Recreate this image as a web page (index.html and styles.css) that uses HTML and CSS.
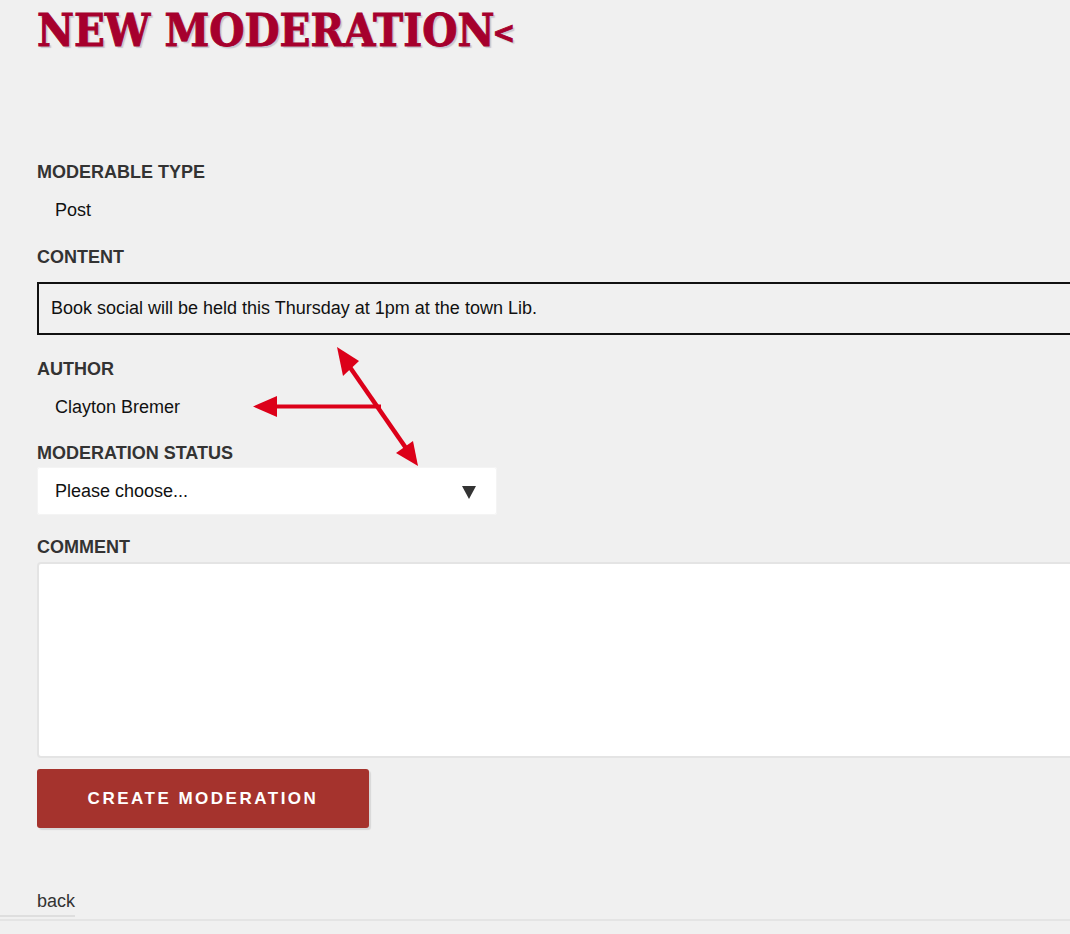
FILE: index.html
```html
<!DOCTYPE html>
<html lang="en">
<head>
<meta charset="utf-8">
<title>New Moderation</title>
<link rel="stylesheet" href="styles.css">
</head>
<body>
<div class="page">
  <h1 class="title">NEW MODERATION<span class="lt">&lt;</span></h1>

  <form class="form">
    <div class="field">
      <div class="label">MODERABLE TYPE</div>
      <div class="value">Post</div>
    </div>

    <div class="field field-content">
      <div class="label">CONTENT</div>
      <div class="content-box">Book social will be held this Thursday at 1pm at the town Lib.</div>
    </div>

    <div class="field field-author">
      <div class="label">AUTHOR</div>
      <div class="value">Clayton Bremer</div>
    </div>

    <div class="field field-status">
      <div class="label label-tight">MODERATION STATUS</div>
      <div class="select">
        <span>Please choose...</span>
        <span class="caret"></span>
      </div>
    </div>

    <div class="field field-comment">
      <div class="label label-tight">COMMENT</div>
      <div class="textarea"></div>
    </div>

    <button type="button" class="submit">CREATE MODERATION</button>
  </form>

  <div class="back-row"><a class="back" href="#">back</a></div>
  <div class="footer-rule"></div>

  <svg class="annotations" width="1070" height="934" viewBox="0 0 1070 934">
    <g fill="#dc0019" stroke="#dc0019">
      <line x1="274" y1="406.5" x2="381" y2="406.5" stroke-width="4"/>
      <polygon points="253,406.5 277,396 277,417" stroke="none"/>
      <line x1="347" y1="363" x2="408" y2="451" stroke-width="4.5"/>
      <polygon points="337,347 359,361 343,376" stroke="none"/>
      <polygon points="418,466 396,453 413,441" stroke="none"/>
    </g>
  </svg>
</div>
</body>
</html>
```

FILE: styles.css
```css
html, body {
  margin: 0;
  padding: 0;
  background: #f0f0f0;
  overflow: hidden;
}

.page {
  position: relative;
  width: 1070px;
  min-height: 934px;
  font-family: "Liberation Sans", Arial, sans-serif;
  font-size: 18px;
  line-height: 22px;
  color: #111;
}

.title {
  margin: 0;
  padding: 6px 0 0 37px;
  height: 117px;
  box-sizing: border-box;
  font-family: "DejaVu Serif", Georgia, serif;
  font-stretch: condensed;
  font-weight: bold;
  font-size: 45px;
  line-height: 50px;
  color: #a6002d;
  -webkit-text-stroke: 0.9px #a6002d;
  text-shadow: 2px 2px 1px rgba(120, 120, 145, 0.35);
  white-space: nowrap;
}

.title .lt {
  font-size: 30px;
  margin-left: -2px;
  vertical-align: 3px;
}

.form {
  display: flex;
  flex-direction: column;
  align-items: flex-start;
  padding: 44px 0 0 37px;
}

.field {
  display: flex;
  flex-direction: column;
  align-items: flex-start;
}

.label {
  font-weight: bold;
  color: #333;
  margin-bottom: 16px;
}

.label-tight {
  margin-bottom: 3px;
}

.value {
  padding-left: 18px;
}

.field-content {
  margin-top: 25px;
}

.field-content .label {
  margin-bottom: 14px;
}

.content-box {
  width: 1100px;
  box-sizing: border-box;
  border: 2px solid #111;
  padding: 13px 12px 14px;
  background: #f0f0f0;
}

.field-author {
  margin-top: 23px;
}

.field-status {
  margin-top: 24px;
}

.select {
  display: flex;
  justify-content: space-between;
  align-items: center;
  width: 460px;
  height: 48px;
  box-sizing: border-box;
  padding: 0 21px 0 18px;
  background: #fff;
  border-radius: 3px;
  box-shadow: inset 0 0 0 1px #f4f4f4;
}

.caret {
  width: 0;
  height: 0;
  border-left: 7px solid transparent;
  border-right: 7px solid transparent;
  border-top: 13px solid #333;
  margin-top: 2px;
}

.field-comment {
  margin-top: 21px;
}

.field-comment .label {
  margin-bottom: 4px;
}

.textarea {
  width: 1100px;
  height: 196px;
  box-sizing: border-box;
  background: #fff;
  border: 2px solid #e4e4e4;
  border-radius: 4px;
}

.submit {
  margin-top: 11px;
  width: 332px;
  height: 59px;
  padding: 0;
  border: none;
  border-radius: 3px;
  background: #a5332d;
  color: #fff;
  font-family: "Liberation Sans", Arial, sans-serif;
  font-weight: bold;
  font-size: 17px;
  letter-spacing: 2.5px;
  box-shadow: 2px 2px 1px #d8d8d8;
  cursor: pointer;
}

.back-row {
  margin-top: 62px;
  width: 75px;
  padding-left: 37px;
  padding-bottom: 3px;
  box-sizing: border-box;
  border-bottom: 2px solid #dedede;
}

.back {
  color: #333;
  text-decoration: none;
}

.footer-rule {
  margin-top: 2px;
  height: 2px;
  background: #e4e4e4;
}

.annotations {
  position: absolute;
  left: 0;
  top: 0;
  pointer-events: none;
}
```
